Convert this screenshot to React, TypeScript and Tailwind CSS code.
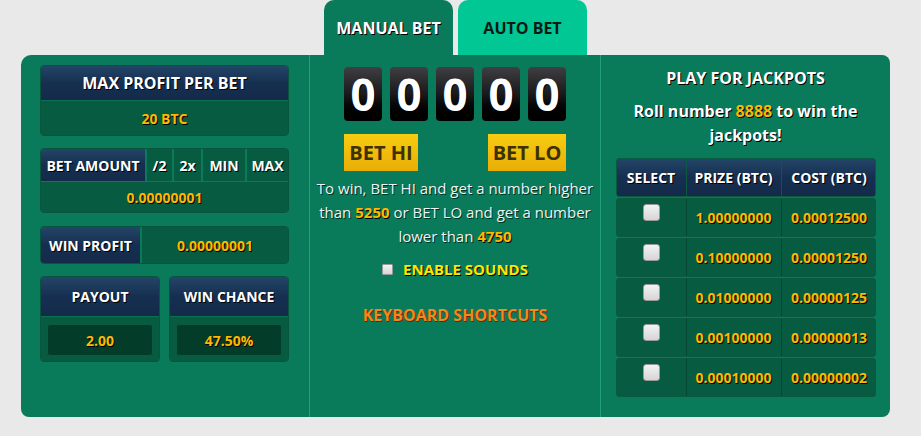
import React from "react";

const shadow = "[text-shadow:1px_1px_0_#000]";
const navy = "bg-gradient-to-b from-[#234567] via-[#162f50] to-[#142a4a]";
const darkGreen = "bg-[#065b40]";

const jackpots = [
  { prize: "1.00000000", cost: "0.00012500" },
  { prize: "0.10000000", cost: "0.00001250" },
  { prize: "0.01000000", cost: "0.00000125" },
  { prize: "0.00100000", cost: "0.00000013" },
  { prize: "0.00010000", cost: "0.00000002" },
];

const Check = ({ className = "" }: { className?: string }) => (
  <span
    className={`inline-block w-[17px] h-[17px] rounded-[3px] border border-[#9a9a9a] bg-gradient-to-b from-[#f2f2f2] to-[#d6d6d6] ${className}`}
  />
);

const Digit = () => (
  <div className="w-[38px] h-[54px] rounded-[4px] bg-gradient-to-b from-[#404044] via-[#1a1a1c] to-[#000] flex items-center justify-center">
    <span className={`text-white text-[44px] font-bold leading-none ${shadow}`}>0</span>
  </div>
);

export default function App() {
  return (
    <div className="min-h-screen bg-[#e9e9e9] font-['Open_Sans',sans-serif] pl-[21px]">
      {/* Tabs */}
      <div className="flex h-[55px] pl-[303px] gap-[5px]">
        <div className="w-[129px] rounded-t-[10px] bg-[#0a7b5a] flex items-center justify-center">
          <span className={`text-white font-bold text-[16px] ${shadow}`}>MANUAL BET</span>
        </div>
        <div className="w-[129px] rounded-t-[10px] bg-[#00c794] flex items-center justify-center">
          <span className="text-[#0a1a14] font-bold text-[16px]">AUTO BET</span>
        </div>
      </div>

      {/* Panel */}
      <div className="w-[869px] h-[362px] rounded-[8px] rounded-tl-[10px] bg-[#0a7b5a] flex">
        {/* Left column */}
        <div className="w-[289px] pl-[19px] pr-[20px] pt-[10px] flex flex-col border-r border-[#22a07a]">
          <div className="rounded-[4px] overflow-hidden border border-[#08553c]">
            <div className={`${navy} h-[34px] flex items-center justify-center text-white font-bold text-[16px] ${shadow}`}>
              MAX PROFIT PER BET
            </div>
            <div className={`${darkGreen} h-[35px] border-t border-[#0e7050] flex items-center justify-center text-[#ffb800] font-bold text-[14px] ${shadow}`}>
              20 BTC
            </div>
          </div>

          <div className="mt-[12px] rounded-[4px] overflow-hidden border border-[#08553c] bg-[#0a7b5a]">
            <div className="flex gap-[2px] h-[32px] text-white font-bold text-[14px]">
              <div className={`${navy} w-[104px] flex items-center justify-center ${shadow}`}>BET AMOUNT</div>
              <div className={`${darkGreen} w-[25px] flex items-center justify-center ${shadow}`}>/2</div>
              <div className={`${darkGreen} w-[27px] flex items-center justify-center ${shadow}`}>2x</div>
              <div className={`${darkGreen} w-[42px] flex items-center justify-center ${shadow}`}>MIN</div>
              <div className={`${darkGreen} flex-1 flex items-center justify-center ${shadow}`}>MAX</div>
            </div>
            <div className={`${darkGreen} h-[30px] mt-[1px] flex items-center justify-center text-[#ffb800] font-bold text-[14px] ${shadow}`}>
              0.00000001
            </div>
          </div>

          <div className="mt-[13px] h-[38px] flex gap-[2px] rounded-[4px] overflow-hidden border border-[#08553c] bg-[#0a7b5a]">
            <div className={`${navy} w-[99px] flex items-center justify-center text-white font-bold text-[14px] ${shadow}`}>
              WIN PROFIT
            </div>
            <div className={`${darkGreen} flex-1 flex items-center justify-center text-[#ffb800] font-bold text-[14px] ${shadow}`}>
              0.00000001
            </div>
          </div>

          <div className="mt-[12px] flex justify-between">
            {[
              ["PAYOUT", "2.00"],
              ["WIN CHANCE", "47.50%"],
            ].map(([label, value]) => (
              <div key={label} className="w-[120px] h-[86px] rounded-[4px] overflow-hidden border border-[#08553c] flex flex-col">
                <div className={`${navy} h-[39px] flex items-center justify-center text-white font-bold text-[14px] ${shadow}`}>
                  {label}
                </div>
                <div className={`${darkGreen} flex-1 border-t border-[#0e7050] px-[6px] pt-[7px] pb-[5px]`}>
                  <div className={`h-full rounded-[3px] bg-[#033d29] border border-[#0a5a3f] flex items-center justify-center text-[#ffb800] font-bold text-[14px] ${shadow}`}>
                    {value}
                  </div>
                </div>
              </div>
            ))}
          </div>
        </div>

        {/* Middle column */}
        <div className="w-[291px] flex flex-col items-center pt-[12px] border-r border-[#22a07a]">
          <div className="flex gap-[8px]">
            <Digit />
            <Digit />
            <Digit />
            <Digit />
            <Digit />
          </div>
          <div className="w-[222px] flex justify-between mt-[13px]">
            <button className="w-[74px] h-[37px] bg-gradient-to-b from-[#f8cc12] to-[#e8ae05] text-[#3e3100] font-bold text-[20px]">
              BET HI
            </button>
            <button className="w-[78px] h-[37px] bg-gradient-to-b from-[#f8cc12] to-[#e8ae05] text-[#3e3100] font-bold text-[20px]">
              BET LO
            </button>
          </div>
          <p className="mt-[5px] w-[290px] text-center text-[#f2f2f2] text-[15px] leading-[24px] [text-shadow:1px_1px_0_#00301f]">
            To win, BET HI and get a number higher than{" "}
            <b className={`text-[#ffb800] ${shadow}`}>5250</b> or BET LO and get a number lower than{" "}
            <b className={`text-[#ffb800] ${shadow}`}>4750</b>
          </p>
          <div className="mt-[10px] flex items-center gap-[10px]">
            <Check className="!w-[11px] !h-[11px] !rounded-[1px]" />
            <span className={`text-[#ffe600] font-bold text-[15px] ${shadow}`}>ENABLE SOUNDS</span>
          </div>
          <div className={`mt-[22px] text-[#f7861c] font-bold text-[16px] [text-shadow:1px_1px_0_#5a2a00]`}>
            KEYBOARD SHORTCUTS
          </div>
        </div>

        {/* Right column */}
        <div className="flex-1 flex flex-col items-center pt-[11px]">
          <div className={`text-white font-bold text-[16px] ${shadow}`}>PLAY FOR JACKPOTS</div>
          <div className={`mt-[9px] w-[250px] text-center text-white font-bold text-[16px] leading-[24px] ${shadow}`}>
            Roll number <span className="text-[#ffb800]">8888</span> to win the jackpots!
          </div>
          <div className="mt-[11px] w-[260px]">
            <div className={`${navy} h-[39px] rounded-[3px] grid grid-cols-[70px_95px_95px] border border-[#0a5a3f] text-white font-bold text-[14px] ${shadow}`}>
              <div className="flex items-center justify-center border-r border-[#0a5a3f]">SELECT</div>
              <div className="flex items-center justify-center border-r border-[#0a5a3f]">PRIZE (BTC)</div>
              <div className="flex items-center justify-center">COST (BTC)</div>
            </div>
            {jackpots.map((j) => (
              <div
                key={j.prize}
                className={`${darkGreen} mt-[1px] h-[39px] rounded-[3px] grid grid-cols-[70px_95px_95px] border border-[#0a5a3f] text-[#ffb800] font-bold text-[14px] ${shadow}`}
              >
                <div className="flex justify-center pt-[5px] border-r border-[#04492f]">
                  <Check />
                </div>
                <div className="flex items-center justify-center border-r border-[#04492f]">{j.prize}</div>
                <div className="flex items-center justify-center">{j.cost}</div>
              </div>
            ))}
          </div>
        </div>
      </div>
    </div>
  );
}
